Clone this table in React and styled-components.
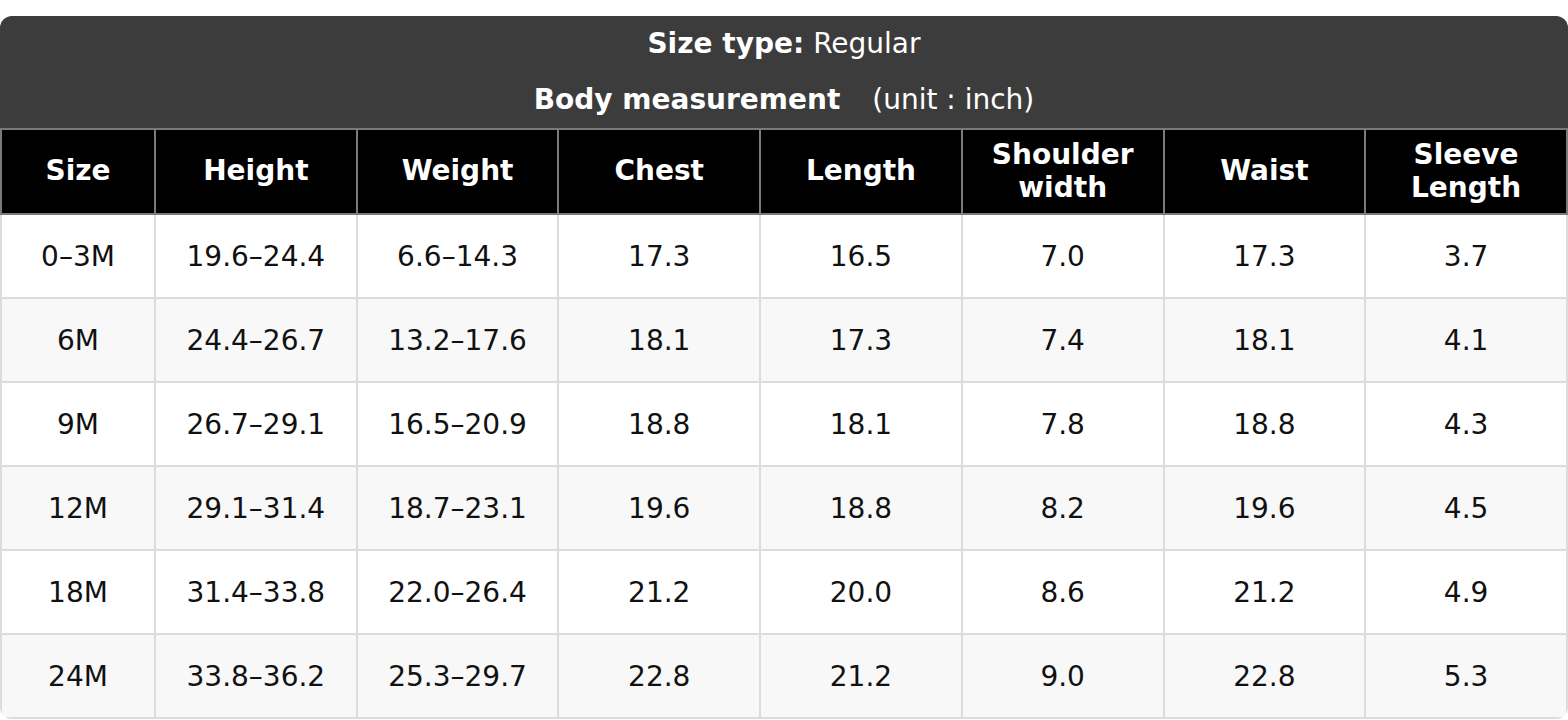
import React from "react";
import styled, { createGlobalStyle } from "styled-components";

const GlobalStyle = createGlobalStyle`
  html, body {
    margin: 0;
    padding: 0;
    background: #ffffff;
  }
  body {
    font-family: "DejaVu Sans", "Liberation Sans", sans-serif;
  }
`;

const Page = styled.div`
  padding-top: 16px;
  width: 1568px;
`;

const ChartCard = styled.div`
  width: 1568px;
  border-radius: 12px;
  overflow: hidden;
  background: #ffffff;
`;

const Caption = styled.div`
  background: #3c3c3c;
  color: #ffffff;
  display: flex;
  flex-direction: column;
`;

const CaptionLine = styled.div`
  height: 56px;
  display: flex;
  align-items: center;
  justify-content: center;
  font-size: 28px;
  line-height: 1;
`;

const Strong = styled.strong`
  font-weight: bold;
`;

const Unit = styled.span`
  margin-left: ${(props) => props.gap || 0}px;
`;

const Table = styled.table`
  width: 100%;
  border-collapse: collapse;
  table-layout: fixed;
  font-size: 28px;
`;

const HeadCell = styled.th`
  background: #000000;
  color: #ffffff;
  font-weight: bold;
  line-height: 1.15;
  height: 83px;
  padding: 0 10px;
  border: 2px solid #7a7a7a;
  text-align: center;
`;

const Row = styled.tr`
  background: ${(props) => (props.striped ? "#f8f8f8" : "#ffffff")};
`;

const Cell = styled.td`
  color: #111111;
  height: 82px;
  padding: 0 10px;
  border: 2px solid #dcdcdc;
  text-align: center;
`;

const columns = [
  "Size",
  "Height",
  "Weight",
  "Chest",
  "Length",
  "Shoulder width",
  "Waist",
  "Sleeve Length",
];

const rows = [
  ["0–3M", "19.6–24.4", "6.6–14.3", "17.3", "16.5", "7.0", "17.3", "3.7"],
  ["6M", "24.4–26.7", "13.2–17.6", "18.1", "17.3", "7.4", "18.1", "4.1"],
  ["9M", "26.7–29.1", "16.5–20.9", "18.8", "18.1", "7.8", "18.8", "4.3"],
  ["12M", "29.1–31.4", "18.7–23.1", "19.6", "18.8", "8.2", "19.6", "4.5"],
  ["18M", "31.4–33.8", "22.0–26.4", "21.2", "20.0", "8.6", "21.2", "4.9"],
  ["24M", "33.8–36.2", "25.3–29.7", "22.8", "21.2", "9.0", "22.8", "5.3"],
];

export default function App() {
  return (
    <Page>
      <GlobalStyle />
      <ChartCard>
        <Caption>
          <CaptionLine>
            <Strong>Size type:</Strong>
            <Unit gap={9}>Regular</Unit>
          </CaptionLine>
          <CaptionLine>
            <Strong>Body measurement</Strong>
            <Unit gap={32}>(unit : inch)</Unit>
          </CaptionLine>
        </Caption>
        <Table>
          <colgroup>
            <col style={{ width: 154 }} />
            {columns.slice(1).map((c) => (
              <col key={c} />
            ))}
          </colgroup>
          <thead>
            <tr>
              {columns.map((c) => (
                <HeadCell key={c}>{c}</HeadCell>
              ))}
            </tr>
          </thead>
          <tbody>
            {rows.map((r, i) => (
              <Row key={r[0]} striped={i % 2 === 1}>
                {r.map((v, j) => (
                  <Cell key={j}>{v}</Cell>
                ))}
              </Row>
            ))}
          </tbody>
        </Table>
      </ChartCard>
    </Page>
  );
}
